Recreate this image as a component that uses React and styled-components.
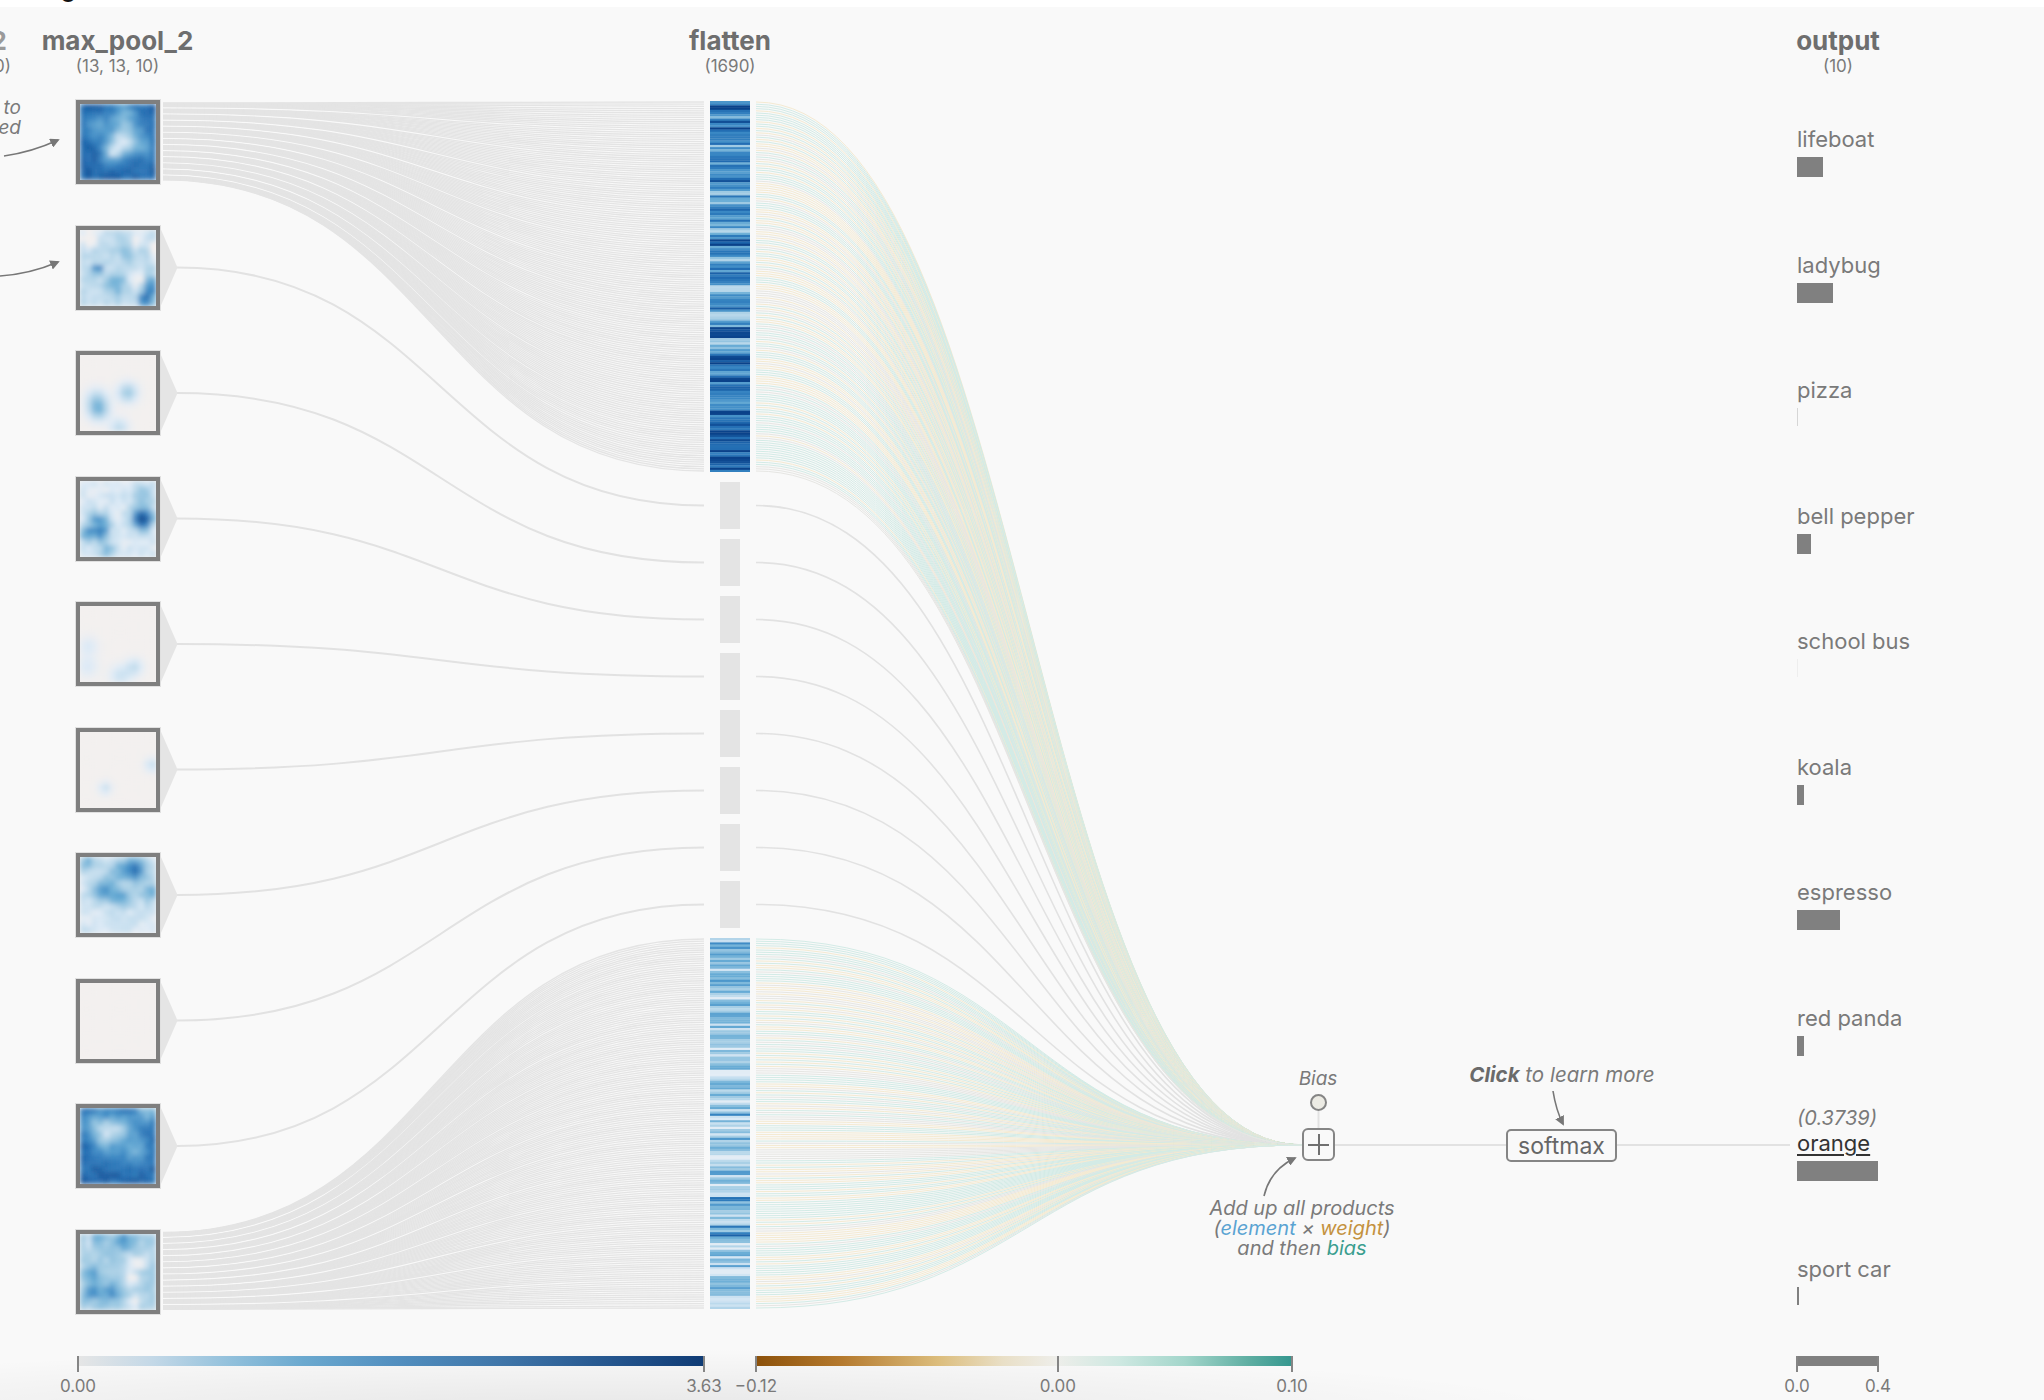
import React from "react";
import styled, { createGlobalStyle } from "styled-components";

const GlobalStyle = createGlobalStyle`
  html, body {
    margin: 0;
    padding: 0;
  }
  body {
    background: #f9f9f9;
    font-family: Inter, "Noto Sans", "Liberation Sans", sans-serif;
    color: #777;
  }
`;

// geometry shared by the wires and the columns
const ROW_TOP = 100;
const ROW_H = 125.5;
const BLOCK_TOP = 101;
const BLOCK_H = 371;
const CELL_TOP = 482;
const CELL_STEP = 57;
const BOTTOM_TOP = 938;
const SUM = { x: 1302, y: 1145 };

const BLUE_SCALE =
  "linear-gradient(to right, #e6e6e6 0%, #c3d8e7 12%, #93c1dc 24%, #6ba9cf 36%, #5390c0 50%, #3f75a8 68%, #25568e 85%, #0f3b75 100%)";
const WEIGHT_SCALE =
  "linear-gradient(to right, #8c510a 0%, #b57a2e 16%, #dcbd7c 34%, #e9dfc6 46%, #eeeeea 56%, #cde8e1 68%, #a3d6cb 80%, #5eaea2 92%, #35978f 100%)";

function makeRng(seed) {
  let a = seed >>> 0;
  return () => {
    a = (a + 0x6d2b79f5) | 0;
    let t = Math.imul(a ^ (a >>> 15), 1 | a);
    t = (t + Math.imul(t ^ (t >>> 7), 61 | t)) ^ t;
    return ((t ^ (t >>> 14)) >>> 0) / 4294967296;
  };
}

const MAP_SPECS = [
  { seed: 11, base: 0.88, blobs: 6, amp: -0.5, sigma: 1.5 },
  { seed: 23, base: 0.22, blobs: 10, amp: 0.65, sigma: 1.0, mixed: true },
  { seed: 37, base: 0, blobs: 4, amp: 0.45, sigma: 0.9 },
  { seed: 41, base: 0.12, blobs: 8, amp: 0.55, sigma: 1.2 },
  { seed: 53, base: 0, blobs: 4, amp: 0.22, sigma: 0.9 },
  { seed: 67, base: 0, blobs: 2, amp: 0.25, sigma: 0.8 },
  { seed: 71, base: 0.14, blobs: 7, amp: 0.45, sigma: 1.2 },
  { seed: 83, base: 0, blobs: 0, amp: 0, sigma: 1 },
  { seed: 97, base: 0.86, blobs: 6, amp: -0.45, sigma: 1.5 },
  { seed: 101, base: 0.32, blobs: 10, amp: 0.5, sigma: 1.1, mixed: true },
];

function buildMap({ seed, base, blobs, amp, sigma, mixed }) {
  const r = makeRng(seed);
  const list = Array.from({ length: blobs }, () => ({
    x: r() * 12,
    y: r() * 12,
    a: amp * (0.5 + 0.5 * r()) * (mixed && r() < 0.4 ? -1 : 1),
    s: sigma * (0.6 + 0.8 * r()),
  }));
  const grid = [];
  for (let y = 0; y < 13; y++) {
    for (let x = 0; x < 13; x++) {
      let v = base + (base > 0 ? (r() - 0.5) * 0.16 : 0);
      for (const b of list) {
        const d2 = (x - b.x) ** 2 + (y - b.y) ** 2;
        v += b.a * Math.exp(-d2 / (2 * b.s * b.s));
      }
      grid.push(Math.max(0, Math.min(1, v)));
    }
  }
  return grid;
}

const BLUES = [
  [0, [243, 240, 239]],
  [0.1, [222, 235, 247]],
  [0.3, [170, 208, 230]],
  [0.5, [107, 174, 214]],
  [0.68, [58, 136, 196]],
  [0.85, [33, 108, 178]],
  [1, [10, 66, 138]],
];

function blue(v) {
  for (let i = 1; i < BLUES.length; i++) {
    const [p1, c1] = BLUES[i];
    const [p0, c0] = BLUES[i - 1];
    if (v <= p1) {
      const t = (v - p0) / (p1 - p0);
      const c = c0.map((k, j) => Math.round(k + (c1[j] - k) * t));
      return `rgb(${c.join(",")})`;
    }
  }
  return "rgb(10,66,138)";
}

const MAPS = MAP_SPECS.map(buildMap);

const stripeRng = makeRng(7);
const TOP_STRIPES = MAPS[0].map((v) =>
  Math.max(0.25, Math.min(1, v + (stripeRng() - 0.5) * 0.5))
);
const BOTTOM_STRIPES = MAPS[9].map((v) =>
  Math.max(0.08, Math.min(1, v + (stripeRng() - 0.5) * 0.45))
);

const outputs = [
  { label: "lifeboat", w: 26 },
  { label: "ladybug", w: 36 },
  { label: "pizza", w: 1, tone: "#d6d6d6" },
  { label: "bell pepper", w: 14 },
  { label: "school bus", w: 1, tone: "#eeeeee" },
  { label: "koala", w: 7 },
  { label: "espresso", w: 43 },
  { label: "red panda", w: 7 },
  { label: "orange", w: 81, prob: "(0.3739)", active: true },
  { label: "sport car", w: 2 },
];

const Page = styled.div`
  position: relative;
  width: 2044px;
  height: 1400px;
  overflow: hidden;
  background: radial-gradient(
      ellipse 980px 64px at 600px 1412px,
      rgba(0, 0, 0, 0.075),
      rgba(0, 0, 0, 0)
    ),
    #f9f9f9;
`;

const TopStrip = styled.div`
  height: 7px;
  overflow: hidden;
  background: #ffffff;
`;

const Peek = styled.span`
  display: block;
  margin: -21px 0 0 60px;
  font-size: 26px;
  font-weight: 800;
  line-height: 28px;
  color: #111;
`;

const WireLayer = styled.svg`
  position: absolute;
  top: 0;
  left: 0;
  pointer-events: none;
`;

const Columns = styled.div`
  position: relative;
  display: grid;
  grid-template-columns: 75px 85px 550px 40px 1046px 248px;
`;

const Column = styled.div`
  display: flex;
  flex-direction: column;
  align-items: ${(p) => p.$align || "center"};
`;

const LayerHeader = styled.div`
  height: 93px;
  box-sizing: border-box;
  padding-top: 19px;
  display: flex;
  flex-direction: column;
  align-items: ${(p) => (p.$edge ? "flex-end" : "center")};
  width: ${(p) => (p.$width ? `${p.$width}px` : "auto")};
  padding-right: ${(p) => (p.$edge ? "68px" : "0")};
  white-space: nowrap;
`;

const LayerTitle = styled.div`
  font-size: 26px;
  font-weight: 700;
  line-height: 30px;
  color: ${(p) => (p.$faded ? "#9a9a9a" : "#6e6e6e")};
`;

const LayerShape = styled.div`
  font-size: 17px;
  line-height: 20px;
  color: #7a7a7a;
  margin-right: ${(p) => (p.$edge ? "-4px" : "0")};
`;

const EdgeNote = styled.div`
  margin-top: -2px;
  padding-right: 54px;
  text-align: right;
  font-style: italic;
  font-size: 19px;
  line-height: 20px;
  color: #7a7a7a;
  white-space: nowrap;
`;

const MapList = styled.div`
  display: grid;
  grid-auto-rows: ${ROW_H}px;
`;

const MapFrame = styled.div`
  position: relative;
  width: 84px;
  height: 84px;
  box-sizing: border-box;
  border: 4px solid #7f7f7f;
  background: #f3f0ef;
  box-shadow: 0 0 0 1px rgba(127, 127, 127, 0.2);

  &::after {
    content: "";
    display: ${(p) => (p.$arrow ? "block" : "none")};
    position: absolute;
    left: 81px;
    top: -1px;
    width: 17px;
    height: 78px;
    background: #e5e5e5;
    clip-path: polygon(0 0, 100% 50%, 0 100%);
  }
`;

const HeatSvg = styled.svg`
  display: block;
  width: 76px;
  height: 76px;
`;

const FlatStack = styled.div`
  margin-top: 1px;
  display: flex;
  flex-direction: column;
  align-items: center;
  gap: 10px;
`;

const StripeSvg = styled.svg`
  display: block;
  width: 40px;
  height: ${BLOCK_H}px;
`;

const EmptyCell = styled.div`
  width: 20px;
  height: 47px;
  background: #e4e4e4;
`;

const OutputHeader = styled(LayerHeader)`
  margin-left: 1px;
`;

const OutputList = styled.div`
  display: grid;
  grid-auto-rows: ${ROW_H}px;
  padding-left: 1px;
`;

const OutputRow = styled.div`
  display: grid;
  grid-template-rows: 26px 26px;
  align-content: start;
`;

const Prob = styled.div`
  align-self: end;
  font-style: italic;
  font-size: 20px;
  line-height: 24px;
  color: #7a7a7a;
`;

const ClassLabel = styled.div`
  font-size: 22px;
  line-height: 26px;
  color: ${(p) => (p.$active ? "#333" : "#7a7a7a")};
  text-decoration: ${(p) => (p.$active ? "underline" : "none")};
  text-underline-offset: 3px;
  text-decoration-thickness: 2px;
  white-space: nowrap;
`;

const ProbBar = styled.div`
  margin-top: 5px;
  height: ${(p) => (p.$thin ? 18 : 20)}px;
  background: ${(p) => p.$tone || "#808080"};
`;

const SumBox = styled.div`
  position: absolute;
  left: 1302px;
  top: 1128px;
  width: 33px;
  height: 33px;
  box-sizing: border-box;
  border: 2px solid #858585;
  border-radius: 6px;
  background: #f9f9f9;

  &::before,
  &::after {
    content: "";
    position: absolute;
    background: #707070;
  }
  &::before {
    left: 4px;
    right: 4px;
    top: 13.5px;
    height: 2px;
  }
  &::after {
    top: 4px;
    bottom: 4px;
    left: 13.5px;
    width: 2px;
  }
`;

const BiasDot = styled.div`
  position: absolute;
  left: 1310px;
  top: 1094px;
  width: 17px;
  height: 17px;
  box-sizing: border-box;
  border: 2px solid #858585;
  border-radius: 50%;
  background: #ecebe4;
`;

const BiasLabel = styled.div`
  position: absolute;
  left: 1278px;
  top: 1068px;
  width: 80px;
  text-align: center;
  font-style: italic;
  font-size: 19px;
  line-height: 22px;
  color: #7a7a7a;
`;

const SoftmaxBox = styled.div`
  position: absolute;
  left: 1506px;
  top: 1129px;
  width: 111px;
  height: 33px;
  box-sizing: border-box;
  border: 2px solid #858585;
  border-radius: 5px;
  background: #f9f9f9;
  display: flex;
  align-items: center;
  justify-content: center;
  font-size: 23px;
  color: #666;
`;

const ClickHint = styled.div`
  position: absolute;
  left: 1432px;
  top: 1063px;
  width: 260px;
  text-align: center;
  font-style: italic;
  font-size: 20.5px;
  line-height: 24px;
  color: #7a7a7a;

  b {
    font-weight: 700;
    color: #6a6a6a;
  }
`;

const SumNote = styled.div`
  position: absolute;
  left: 1167px;
  top: 1198px;
  width: 270px;
  text-align: center;
  font-style: italic;
  font-size: 20px;
  line-height: 20px;
  color: #7a7a7a;
`;

const Tint = styled.span`
  color: ${(p) => p.$c};
`;

const Legend = styled.div`
  display: grid;
  grid-template-columns: 78px 626px 52px 536px 505px 81px;
  padding-top: 1px;
  height: 44px;
`;

const ScaleWrap = styled.div`
  position: relative;
  grid-column: ${(p) => p.$col};
`;

const ScaleBar = styled.div`
  height: 10px;
  background: ${(p) => p.$fill};
`;

const Tick = styled.span`
  position: absolute;
  top: 0;
  width: 2px;
  height: 16px;
  margin-left: -1px;
  background: #858585;
`;

const TickLabel = styled.span`
  position: absolute;
  top: 20px;
  transform: translateX(-50%);
  font-size: 17px;
  line-height: 20px;
  color: #7a7a7a;
  white-space: nowrap;
`;

function link(x0, y0, x1, y1) {
  const mx = (x0 + x1) / 2;
  return `M${x0},${y0.toFixed(2)} C${mx},${y0.toFixed(2)} ${mx},${y1.toFixed(2)} ${x1},${y1.toFixed(2)}`;
}

function boxTop(i) {
  return ROW_TOP + ROW_H * i;
}

function Wires() {
  const leftFans = [];
  [
    [0, BLOCK_TOP],
    [9, BOTTOM_TOP],
  ].forEach(([box, top]) => {
    for (let r = 0; r < 13; r++) {
      for (let c = 0; c < 13; c++) {
        const i = r * 13 + c;
        const y0 = boxTop(box) + 3 + r * 6.1 + c * 0.3;
        const y1 = top + 1 + i * ((BLOCK_H - 2) / 168);
        leftFans.push(<path key={`l${box}-${i}`} d={link(163, y0, 704, y1)} />);
      }
    }
  });

  const middles = [];
  const middleRight = [];
  for (let j = 0; j < 8; j++) {
    const gy = CELL_TOP + CELL_STEP * j + 23.5;
    middles.push(<path key={`m${j}`} d={link(177, boxTop(j + 1) + 42, 704, gy)} />);
    middleRight.push(<path key={`mr${j}`} d={link(756, gy, SUM.x, SUM.y)} />);
  }

  const rng = makeRng(3);
  const colored = [];
  [BLOCK_TOP, BOTTOM_TOP].forEach((top, b) => {
    for (let i = 0; i < 169; i++) {
      const y = top + 1 + i * ((BLOCK_H - 2) / 168);
      const k = rng();
      const stroke =
        k < 0.5 ? "#d3ebe6" : k < 0.82 ? "#f4ead2" : "#e6e6e3";
      colored.push(<path key={`r${b}-${i}`} d={link(756, y, SUM.x, SUM.y)} stroke={stroke} />);
    }
  });

  return (
    <WireLayer width="2044" height="1400" viewBox="0 0 2044 1400">
      <defs>
        <marker
          id="head"
          viewBox="0 0 10 10"
          refX="8"
          refY="5"
          markerWidth="6"
          markerHeight="6"
          orient="auto"
        >
          <path d="M0,0 L10,5 L0,10 z" fill="#777" />
        </marker>
      </defs>
      <g fill="none" stroke="#e4e4e4" strokeWidth="1.3">
        {leftFans}
      </g>
      <g fill="none" stroke="#e2e2e2" strokeWidth="2">
        {middles}
      </g>
      <g fill="none" stroke="#e2e2e2" strokeWidth="1.6">
        {middleRight}
      </g>
      <g fill="none" strokeWidth="1">{colored}</g>
      <g fill="none" stroke="#e2e2e2" strokeWidth="2">
        <path d="M1335,1145 H1506" />
        <path d="M1617,1145 H1790" />
        <path d="M1318.5,1111 V1128" />
      </g>
      <g fill="none" stroke="#777" strokeWidth="1.6" markerEnd="url(#head)">
        <path d="M4,156 Q32,152 58,140" />
        <path d="M0,276 Q30,274 58,262" />
        <path d="M1553,1091 Q1556,1110 1563,1124" />
        <path d="M1264,1196 Q1270,1170 1295,1158" />
      </g>
    </WireLayer>
  );
}

function Heatmap({ grid, id }) {
  return (
    <HeatSvg viewBox="0 0 13 13" preserveAspectRatio="none">
      <defs>
        <filter id={id} x="0" y="0" width="1" height="1">
          <feGaussianBlur stdDeviation="0.45" edgeMode="duplicate" />
        </filter>
      </defs>
      <g filter={`url(#${id})`}>
        {grid.map((v, i) => (
          <rect
            key={i}
            x={i % 13}
            y={Math.floor(i / 13)}
            width="1.02"
            height="1.02"
            fill={blue(v)}
          />
        ))}
      </g>
    </HeatSvg>
  );
}

function Stripes({ values }) {
  const h = BLOCK_H / values.length;
  return (
    <StripeSvg viewBox={`0 0 40 ${BLOCK_H}`} preserveAspectRatio="none">
      {values.map((v, i) => (
        <rect key={i} x="0" y={i * h} width="40" height={h + 0.3} fill={blue(v)} />
      ))}
    </StripeSvg>
  );
}

function ColorScale({ col, fill, stops }) {
  return (
    <ScaleWrap $col={col}>
      <ScaleBar $fill={fill} />
      {stops.map((s) => (
        <React.Fragment key={s.label + s.at}>
          <Tick style={{ left: `${s.at * 100}%` }} />
          <TickLabel style={{ left: `${s.at * 100}%` }}>{s.label}</TickLabel>
        </React.Fragment>
      ))}
    </ScaleWrap>
  );
}

export default function App() {
  return (
    <>
      <GlobalStyle />
      <Page>
        <Wires />
        <TopStrip>
          <Peek>o</Peek>
        </TopStrip>
        <Columns>
          <Column $align="flex-end">
            <LayerHeader $edge>
              <LayerTitle $faded>conv_2_2</LayerTitle>
              <LayerShape $edge>(26, 26, 10)</LayerShape>
            </LayerHeader>
            <EdgeNote>
              output is fed to
              <br />
              be flattened
            </EdgeNote>
          </Column>

          <Column>
            <LayerHeader>
              <LayerTitle>max_pool_2</LayerTitle>
              <LayerShape>(13, 13, 10)</LayerShape>
            </LayerHeader>
            <MapList>
              {MAPS.map((grid, i) => (
                <div key={i}>
                  <MapFrame $arrow={i > 0 && i < 9}>
                    <Heatmap grid={grid} id={`heat${i}`} />
                  </MapFrame>
                </div>
              ))}
            </MapList>
          </Column>

          <div />

          <Column>
            <LayerHeader>
              <LayerTitle>flatten</LayerTitle>
              <LayerShape>(1690)</LayerShape>
            </LayerHeader>
            <FlatStack>
              <Stripes values={TOP_STRIPES} />
              {Array.from({ length: 8 }, (_, j) => (
                <EmptyCell key={j} />
              ))}
              <Stripes values={BOTTOM_STRIPES} />
            </FlatStack>
          </Column>

          <div />

          <Column $align="flex-start">
            <OutputHeader $width={82}>
              <LayerTitle>output</LayerTitle>
              <LayerShape>(10)</LayerShape>
            </OutputHeader>
            <OutputList>
              {outputs.map((o) => (
                <OutputRow key={o.label}>
                  <Prob>{o.prob}</Prob>
                  <ClassLabel $active={o.active}>{o.label}</ClassLabel>
                  <ProbBar
                    $tone={o.tone}
                    $thin={o.w <= 2}
                    style={{ width: `${o.w}px` }}
                  />
                </OutputRow>
              ))}
            </OutputList>
          </Column>
        </Columns>

        <Legend>
          <ColorScale
            col={2}
            fill={BLUE_SCALE}
            stops={[
              { at: 0, label: "0.00" },
              { at: 1, label: "3.63" },
            ]}
          />
          <ColorScale
            col={4}
            fill={WEIGHT_SCALE}
            stops={[
              { at: 0, label: "\u22120.12" },
              { at: 0.563, label: "0.00" },
              { at: 1, label: "0.10" },
            ]}
          />
          <ColorScale
            col={6}
            fill="#808080"
            stops={[
              { at: 0, label: "0.0" },
              { at: 1, label: "0.4" },
            ]}
          />
        </Legend>

        <BiasLabel>Bias</BiasLabel>
        <BiasDot />
        <SumBox />
        <SumNote>
          Add up all products
          <br />(<Tint $c="#5aa3d2">element</Tint> × <Tint $c="#c49240">weight</Tint>)
          <br />
          and then <Tint $c="#3a9e8f">bias</Tint>
        </SumNote>
        <ClickHint>
          <b>Click</b> to learn more
        </ClickHint>
        <SoftmaxBox>softmax</SoftmaxBox>
      </Page>
    </>
  );
}
